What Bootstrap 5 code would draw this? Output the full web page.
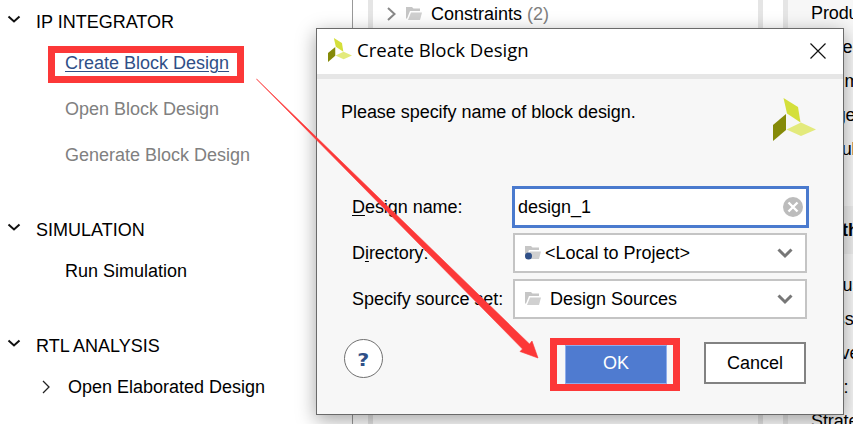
<!DOCTYPE html>
<html lang="en">
<head>
<meta charset="utf-8">
<title>Create Block Design</title>
<link href="https://cdn.jsdelivr.net/npm/bootstrap@5.3.0/dist/css/bootstrap.min.css" rel="stylesheet">
<style>
body{width:853px;height:424px;font:18px/22px "Liberation Sans",Arial,sans-serif;color:#000;background:#fff}
svg{display:block;flex:none}
.flow{width:353px;border-right:1px solid #999}
.sec-head{height:40px;padding:1px 0 0 7px}
.sec-head:first-child{padding-top:3px}
.sec-head svg{margin:-4px 15px 0 0}
.step{height:46px;padding-left:65px}
.step.short{height:44px}
.sub-arrow{margin:0 18px 0 42px}
.sec-gap{height:31px}
.sec-gap.tall{height:32px}
.muted-step{color:#808080}
.active-step{color:#2f4f87;text-decoration:underline;text-decoration-thickness:1px;text-underline-offset:2px}
.mark-box{border:7px solid #fc3838}
.link-mark{margin-left:-17px;padding:0 8px 0 10px;height:37px;line-height:18px;padding-top:1px;margin-top:2px}
.gut{width:15px}
.src{width:395px;border-left:5px solid #e5e5e5;border-right:5px solid #e5e5e5}
.src-row{height:28px;padding-left:14px}
.src-row .fold{margin:0 9px 0 10px}
.mid-gut{width:20px}
.props{width:70px;background:#f7f7f7;border-left:5px solid #e5e5e5;white-space:nowrap;padding-top:2px}
.props .prow{height:34px;padding-left:23px;letter-spacing:-.1px}
.props .band{height:48px;background:#ededed;padding-left:21px;margin-top:34px;margin-bottom:20px}
.dlg{left:316px;top:28px;width:528px;height:387px;border:1px solid #6a6a6a;background:#f7f7f7;box-shadow:0 5px 18px rgba(0,0,0,.36)}
.dlg-title{height:50px;background:#fff;border-bottom:5px solid #e6e6e6;padding:0 17px 0 11px;font:18.6px/24px "Open Sans",sans-serif}
.dlg-title .logo-s{margin-top:-3px}
.dlg-title .cap{letter-spacing:-.04px;margin-left:5px;margin-top:-3px}
.dlg-title .win-x{margin-top:-2px}
.dlg-body{padding:0 35px 0 24px}
.intro{height:107px;padding-top:14px;letter-spacing:-.04px;margin-right:-8px}
.intro svg{margin-top:5px}
.frm{display:grid;grid-template-columns:160px 297px;row-gap:4px;padding-left:11px}
.frm label{line-height:42px;letter-spacing:-.05px}
.fld{height:42px;background:#fff;border:3px solid #4a7ace;padding:0 3px}
.sel{height:40px;width:294px;margin:1px 0 1px 1px;background:#fff;border:2px solid #c4c4c4;padding:0 12px 0 10px}
.sel .lead-in{margin-left:9px}
.frm u{text-underline-offset:2px;text-decoration-thickness:1px}
.foot{padding:17px 2px 0 3px}
.help{width:39px;height:39px;border:1px solid #707070;border-radius:50%;background:#fff;color:#2f4f87;margin-top:2px}
.help span{font:bold 18px/39px "DejaVu Sans",sans-serif;transform:scaleX(1.15)}
.ok-mark{width:130px;height:53px;padding:0 6px 0 8px;margin:1px 24px 0 auto}
.ok-b{width:102px;height:39px;background:#4f7bd0;color:#fff;border:0;border-radius:0;font-size:18px;line-height:32px;padding:0 0 4px;outline:1px solid #8fadeb;outline-offset:-1px;display:block}
.cn-b{width:102px;height:42px;margin-top:5px;border:2px solid #828282;border-radius:0;background:#fff;color:#000;font-size:18px;padding:0}
.arrow{left:0;top:0;pointer-events:none}
</style>
<script src="https://cdn.jsdelivr.net/npm/bootstrap@5.3.0/dist/js/bootstrap.bundle.min.js"></script>
</head>
<body class="position-relative overflow-hidden m-0">
<svg width="0" height="0" class="position-absolute">
  <symbol id="folder" viewBox="0 0 16 14"><path d="M0 0h6l1.500 1.500H14V4H4L1 11.500H0Z" fill="#c6c6c6"/><path d="M5 5.500h11L14 13H2Z" fill="#d0d0d0"/></symbol>
  <symbol id="logo" viewBox="0 0 43 43"><path d="M10.500 0 25 9l2.500 15.500L14 15.500Z" fill="#d4df3b"/><path d="M0 27 13 16v16L0 43Z" fill="#858a08"/><path d="M13.500 31.500 28 24.500l15 7-15 6.500Z" fill="#e3ea7c"/></symbol>
</svg>
<div class="d-flex h-100">
  <nav class="flow flex-shrink-0">
    <div class="sec-head d-flex align-items-center"><svg width="14" height="9" viewBox="0 0 14 9"><path d="m1.500 1.500 5.500 5 5.500-5" fill="none" stroke="#111" stroke-width="2"/></svg>IP INTEGRATOR</div>
    <div class="step d-flex align-items-center"><div class="mark-box link-mark"><span class="active-step">Create Block Design</span></div></div>
    <div class="step d-flex align-items-center muted-step">Open Block Design</div>
    <div class="step d-flex align-items-center muted-step">Generate Block Design</div>
    <div class="sec-gap"></div>
    <div class="sec-head d-flex align-items-center"><svg width="14" height="9" viewBox="0 0 14 9"><path d="m1.500 1.500 5.500 5 5.500-5" fill="none" stroke="#111" stroke-width="2"/></svg>SIMULATION</div>
    <div class="step short d-flex align-items-center">Run Simulation</div>
    <div class="sec-gap tall"></div>
    <div class="sec-head d-flex align-items-center"><svg width="14" height="9" viewBox="0 0 14 9"><path d="m1.500 1.500 5.500 5 5.500-5" fill="none" stroke="#111" stroke-width="2"/></svg>RTL ANALYSIS</div>
    <div class="step short d-flex align-items-center ps-0"><svg class="sub-arrow" width="8" height="14" viewBox="0 0 8 14"><path d="m1 1 6 6-6 6" fill="none" stroke="#222" stroke-width="1.300"/></svg>Open Elaborated Design</div>
  </nav>
  <div class="gut flex-shrink-0"></div>
  <div class="src flex-shrink-0">
    <div class="src-row d-flex align-items-center"><svg width="9" height="14" viewBox="0 0 9 14"><path d="m1 1 6.500 6L1 13" fill="none" stroke="#888" stroke-width="2"/></svg><svg class="fold" width="16" height="14"><use href="#folder"/></svg><span>Constraints <span class="muted-step">(2)</span></span></div>
  </div>
  <div class="mid-gut flex-shrink-0"></div>
  <div class="props flex-grow-1 overflow-hidden">
    <div class="prow">Product family:</div><div class="prow">Project part:</div><div class="prow">Top module name:</div><div class="prow">Target language:</div><div class="prow">Simulator language:</div>
    <div class="band d-flex align-items-center fw-bold">Synthesis</div>
    <div class="prow">Status:</div><div class="prow">Messages:</div><div class="prow">Active run:</div><div class="prow">Part:</div><div class="prow">Strategy:</div>
  </div>
</div>

<section class="dlg position-absolute">
  <div class="dlg-title d-flex align-items-center">
    <svg class="logo-s" width="24" height="24"><use href="#logo"/></svg><span class="cap">Create Block Design</span>
    <svg class="win-x ms-auto" width="16" height="16" viewBox="0 0 16 16"><path d="m.5.5 15 15m0-15-15 15" stroke="#111" stroke-width="1.200"/></svg>
  </div>
  <div class="dlg-body">
    <div class="intro d-flex justify-content-between"><span class="pt-1 mt-1">Please specify name of block design.</span><svg width="43" height="43" viewBox="0 0 43 43"><use href="#logo"/></svg></div>
    <div class="frm">
      <label><u>D</u>esign name:</label>
      <div class="fld d-flex align-items-center justify-content-between">design_1<svg width="20" height="20" viewBox="0 0 20 20"><circle cx="10" cy="10" r="10" fill="#bcbcbc"/><path d="m5.500 5.500 9 9m0-9-9 9" stroke="#fff" stroke-width="2.400"/></svg></div>
      <label>D<u>i</u>rectory:</label>
      <div class="sel d-flex align-items-center"><svg width="16" height="14" viewBox="0 0 16 14" overflow="visible"><use href="#folder" width="16" height="14"/><circle cx="3.500" cy="10" r="3.500" fill="#2f4f87"/></svg><span class="ms-1">&lt;Local to Project&gt;</span><svg class="ms-auto" width="16" height="11" viewBox="0 0 16 11"><path d="m1.500 1.500 6.500 6.500 6.500-6.500" fill="none" stroke="#777" stroke-width="3"/></svg></div>
      <label>Specify source set:</label>
      <div class="sel d-flex align-items-center"><svg width="16" height="14"><use href="#folder"/></svg><span class="lead-in">Design Sources</span><svg class="ms-auto" width="16" height="11" viewBox="0 0 16 11"><path d="m1.500 1.500 6.500 6.500 6.500-6.500" fill="none" stroke="#777" stroke-width="3"/></svg></div>
    </div>
    <div class="foot d-flex align-items-start">
      <div class="help d-flex justify-content-center"><span>?</span></div>
      <div class="mark-box ok-mark"><button class="btn ok-b">OK</button></div>
      <button class="btn cn-b">Cancel</button>
    </div>
  </div>
</section>
<svg class="arrow position-absolute" width="853" height="424"><path d="M256.500 79 529.500 344l2.500-3 6 17-18-6.500 2.500-2.500Z" fill="#fc3838" stroke="#fc3838" stroke-width=".6"/></svg>
</body>
</html>
